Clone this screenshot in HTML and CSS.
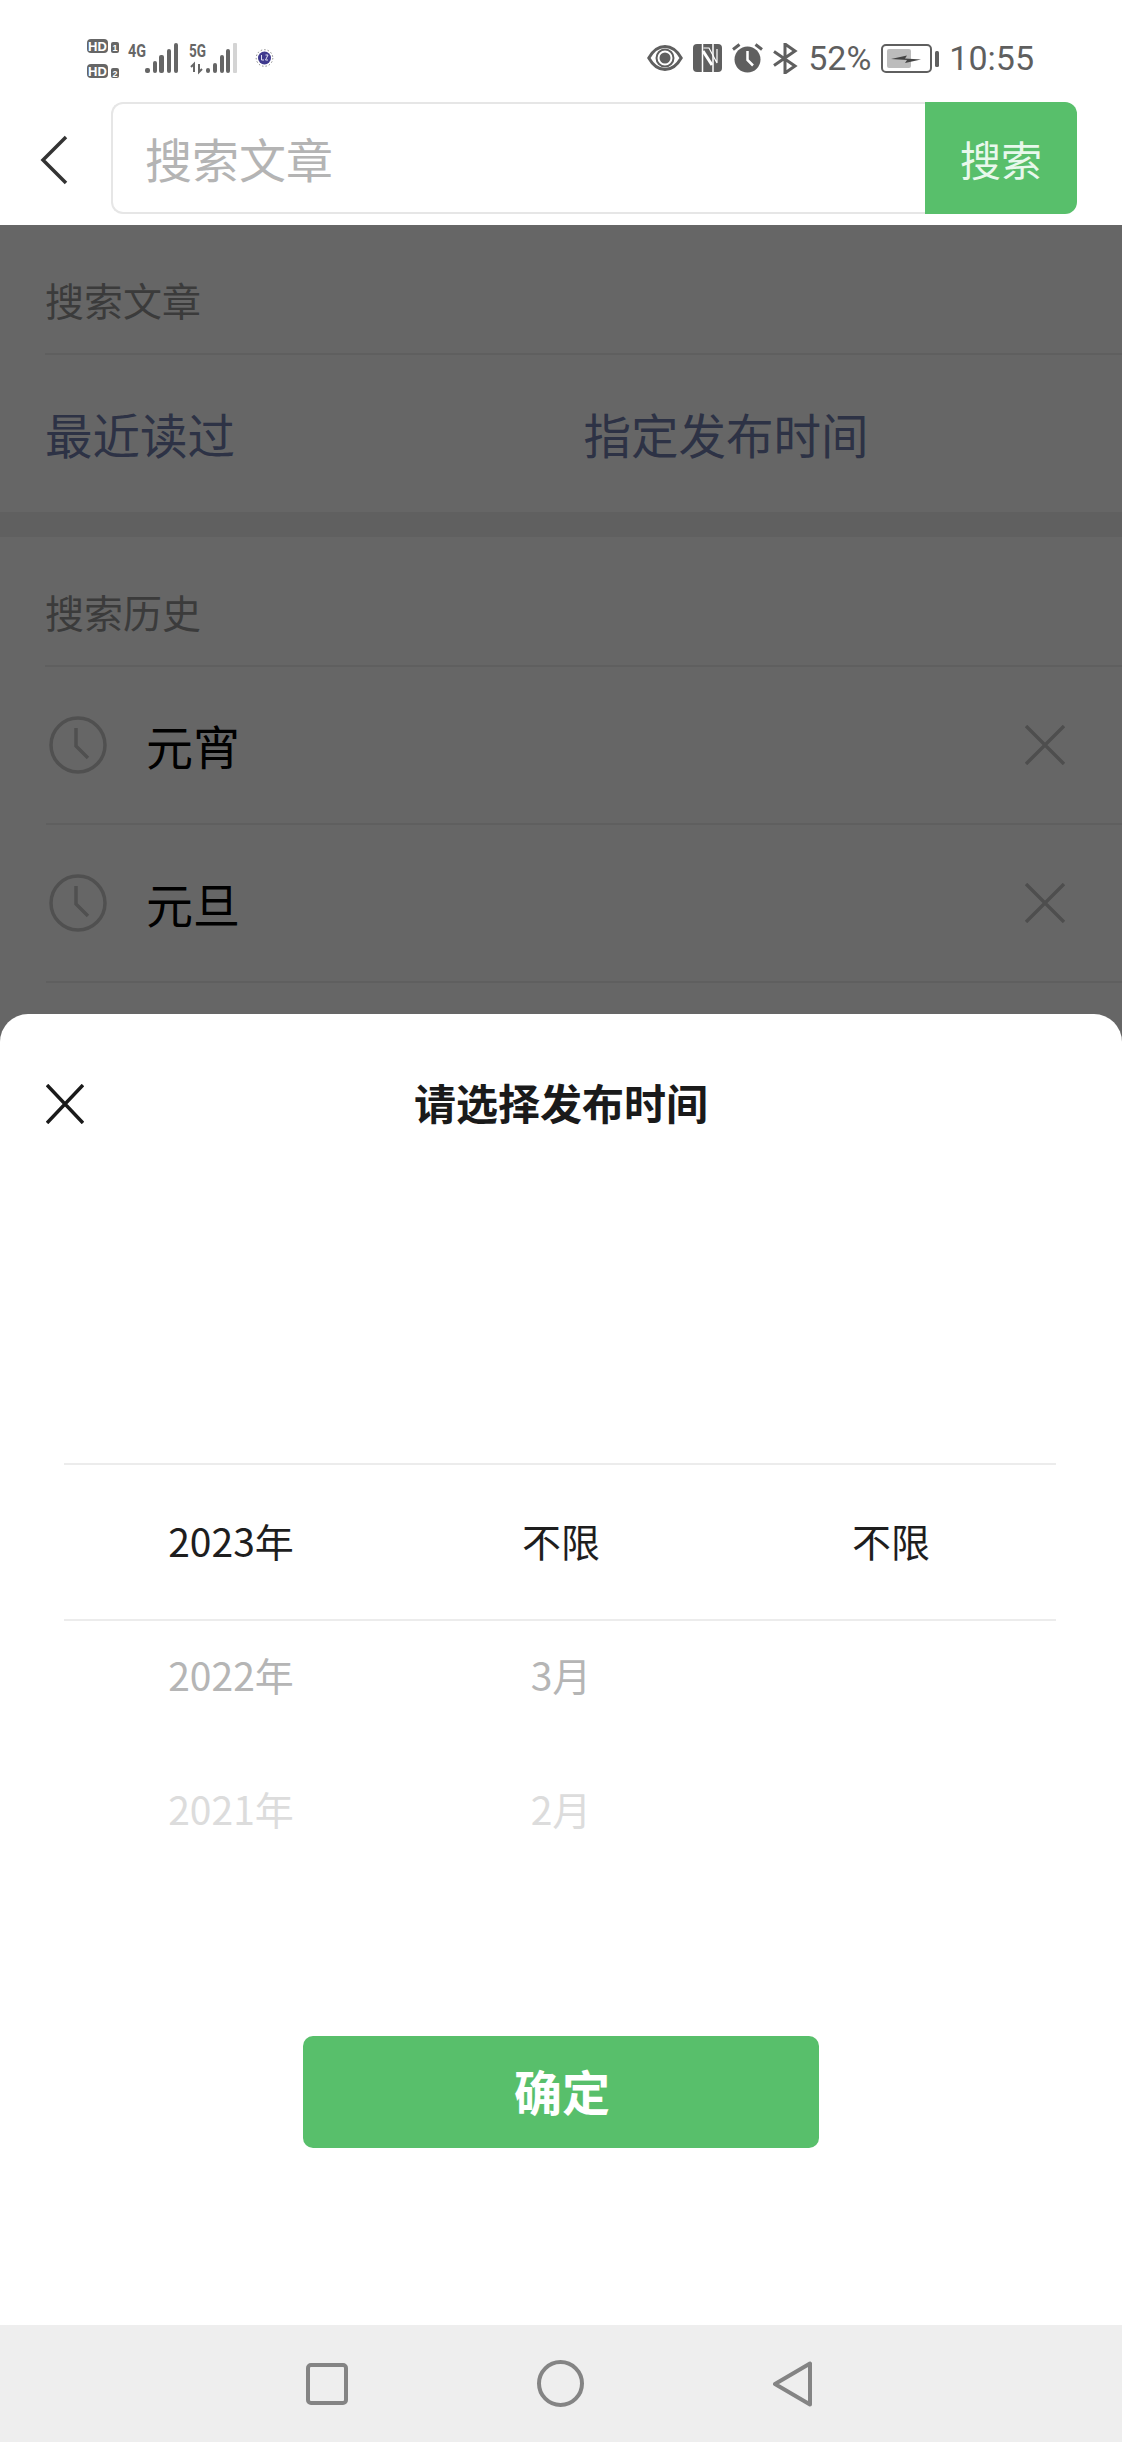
FILE: index.html
```html
<!DOCTYPE html>
<html lang="zh-CN">
<head>
    <meta charset="UTF-8">
    <meta name="viewport" content="width=device-width, initial-scale=1.0">
    <title>搜索文章</title>
    <link rel="stylesheet" href="styles.css">
</head>
<body>
    <div class="screen">
        <!-- Phone status bar -->
        <div class="status">
            <svg class="status-left" width="190" height="44" viewBox="87 36 190 44">
                <rect x="87" y="39" width="21" height="14" rx="4" fill="#666"/>
                <text x="97.5" y="50.5" class="hd">HD</text>
                <rect x="111" y="42" width="8" height="11" rx="2" fill="#666"/>
                <text x="115" y="51" class="sim">1</text>
                <rect x="87" y="64" width="21" height="14" rx="4" fill="#666"/>
                <text x="97.5" y="75.5" class="hd">HD</text>
                <rect x="111" y="68" width="8" height="10" rx="2" fill="#666"/>
                <text x="115" y="76.5" class="sim">2</text>
                <text x="128" y="56.500" class="net" textLength="18" lengthAdjust="spacingAndGlyphs">4G</text>
                <g fill="#666">
                    <rect x="145" y="68" width="5" height="5" rx="2"/>
                    <rect x="153" y="61" width="4" height="12" rx="2"/>
                    <rect x="159" y="55" width="5" height="18" rx="2"/>
                    <rect x="167" y="49" width="4" height="24" rx="2"/>
                    <rect x="174" y="43" width="4" height="30" rx="2"/>
                </g>
                <text x="189" y="56.500" class="net" textLength="17" lengthAdjust="spacingAndGlyphs">5G</text>
                <path d="M194 72v-8l-3 3M199 64v8l3-3" fill="none" stroke="#666" stroke-width="2"/>
                <g fill="#666">
                    <rect x="206" y="68" width="4" height="5" rx="2"/>
                    <rect x="213" y="63" width="4" height="10" rx="2"/>
                    <rect x="220" y="55" width="4" height="18" rx="2"/>
                    <rect x="226" y="49" width="4" height="24" rx="2"/>
                </g>
                <rect x="233" y="43" width="4" height="30" rx="1" fill="#d4d4d4"/>
                <circle cx="264.500" cy="58" r="8.300" fill="none" stroke="#555" stroke-width="0.7" stroke-dasharray="1.500 2"/>
                <circle cx="264.500" cy="58" r="6.500" fill="#3f3a8e"/>
                <path d="M261.500 55v5h2.500M265.500 55h2.500l-2.500 5h2.500" fill="none" stroke="#dcdcf0" stroke-width="1"/>
            </svg>
            <div class="status-right">
                <svg width="36" height="28" viewBox="0 0 36 28">
                    <path d="M1.800 14C6 6.500 11.500 2.500 18 2.500S30 6.500 34.200 14C30 21.500 24.500 25.500 18 25.500S6 21.500 1.800 14z" fill="none" stroke="#5f5f5f" stroke-width="3"/>
                    <circle cx="18" cy="14" r="8.500" fill="none" stroke="#5f5f5f" stroke-width="2"/>
                    <circle cx="18" cy="14" r="5.500" fill="#5f5f5f"/>
                </svg>
                <svg width="29" height="28" viewBox="0 0 29 28">
                    <rect width="29" height="28" rx="4" fill="#5f5f5f"/>
                    <path d="M9.500 0v28M20 0v28" stroke="#fff" stroke-width="1.500"/>
                    <path d="M10 7l9 14" stroke="#fff" stroke-width="3"/>
                    <path d="M10.500 4h5.500l8 15V5" fill="none" stroke="#fff" stroke-width="1.200"/>
                </svg>
                <svg width="31" height="30" viewBox="0 0 31 30">
                    <circle cx="15.500" cy="16.500" r="13" fill="#5f5f5f"/>
                    <path d="M15.500 8v9l5.500 5.500" fill="none" stroke="#fff" stroke-width="2.500"/>
                    <path d="M1 6.500l6.500-5M30 6.500l-6.500-5" stroke="#5f5f5f" stroke-width="3"/>
                </svg>
                <svg width="25" height="31" viewBox="0 0 25 31">
                    <path d="M1 8.500l21 14.500-10 7V1l10 7L1 22.500" fill="none" stroke="#5f5f5f" stroke-width="3"/>
                </svg>
                <span class="percent">52%</span>
                <svg width="58" height="29" viewBox="0 0 58 29">
                    <rect x="1" y="1" width="49" height="27" rx="4" fill="none" stroke="#5f5f5f" stroke-width="2"/>
                    <rect x="6" y="5" width="24" height="19" rx="2" fill="#bcbcbc"/>
                    <path d="M10 15l16-3.500-2 3 16 1-16 3.500 2-3z" fill="#444"/>
                    <rect x="54" y="7" width="4" height="16" rx="1.500" fill="#5f5f5f"/>
                </svg>
                <span class="clock-time">10:55</span>
            </div>
        </div>

        <!-- Search box -->
        <div class="search-row">
            <svg class="back" width="30" height="50" viewBox="0 0 30 50">
                <path d="M26 2L3 25l23 23" fill="none" stroke="#333" stroke-width="3.500"/>
            </svg>
            <form class="search-box">
                <input class="search-input" type="text" placeholder="搜索文章">
                <button class="search-btn" type="button">搜索</button>
            </form>
        </div>

        <!-- Page under the dialog -->
        <div class="section">
            <div class="section-title">搜索文章</div>
            <div class="options">
                <span class="option">最近读过</span>
                <span class="option">指定发布时间</span>
            </div>
        </div>
        <div class="section section-history">
            <div class="section-title">搜索历史</div>
            <div class="history-row">
                <svg class="clock" width="62" height="62" viewBox="0 0 62 62">
                    <circle cx="31" cy="31" r="27" fill="none" stroke="#c8c8c8" stroke-width="3.500"/>
                    <path d="M29 14v18l12 12" fill="none" stroke="#c8c8c8" stroke-width="3.500"/>
                </svg>
                <span class="history-text">元宵</span>
                <svg class="remove" width="40" height="40" viewBox="0 0 40 40">
                    <path d="M1 1l38 38M39 1L1 39" stroke="#c4c4c4" stroke-width="3.500"/>
                </svg>
            </div>
            <div class="history-row">
                <svg class="clock" width="62" height="62" viewBox="0 0 62 62">
                    <circle cx="31" cy="31" r="27" fill="none" stroke="#c8c8c8" stroke-width="3.500"/>
                    <path d="M29 14v18l12 12" fill="none" stroke="#c8c8c8" stroke-width="3.500"/>
                </svg>
                <span class="history-text">元旦</span>
                <svg class="remove" width="40" height="40" viewBox="0 0 40 40">
                    <path d="M1 1l38 38M39 1L1 39" stroke="#c4c4c4" stroke-width="3.500"/>
                </svg>
            </div>
        </div>

        <!-- Dimmed layer with the date dialog -->
        <div class="mask">
            <div class="sheet">
                <div class="sheet-head">
                    <svg width="38" height="40" viewBox="0 0 38 40">
                        <path d="M1 1l36 38M37 1L1 39" stroke="#1a1a1a" stroke-width="3.500"/>
                    </svg>
                    <h1 class="sheet-title">请选择发布时间</h1>
                </div>
                <div class="picker">
                    <div class="picker-row picker-current">
                        <span>2023年</span><span>不限</span><span>不限</span>
                    </div>
                    <div class="picker-row picker-near">
                        <span>2022年</span><span>3月</span><span></span>
                    </div>
                    <div class="picker-row picker-far">
                        <span>2021年</span><span>2月</span><span></span>
                    </div>
                </div>
                <button class="confirm" type="button">确定</button>
            </div>
            <div class="nav">
                <svg width="42" height="42" viewBox="0 0 42 42">
                    <rect x="2" y="2" width="38" height="38" rx="3" fill="none" stroke="#848484" stroke-width="4"/>
                </svg>
                <svg width="47" height="47" viewBox="0 0 47 47">
                    <circle cx="23.500" cy="23.500" r="21.500" fill="none" stroke="#848484" stroke-width="4"/>
                </svg>
                <svg width="39" height="46" viewBox="0 0 39 46">
                    <path d="M37 2.500v41L2 23z" fill="none" stroke="#848484" stroke-width="4" stroke-linejoin="round"/>
                </svg>
            </div>
        </div>
    </div>
</body>
</html>
```

FILE: styles.css
```css
/* Reset */
* {
    margin: 0;
    padding: 0;
    box-sizing: border-box;
}

body {
    font-family: "Noto Sans CJK SC", "Noto Sans", sans-serif;
    background-color: #fff;
}

.screen {
    position: relative;
    width: 1122px;
    height: 2442px;
    overflow: hidden;
}

/* Status bar */
.status {
    display: flex;
    align-items: center;
    justify-content: space-between;
    height: 102px;
    padding: 14px 88px 0 87px;
}

.status svg {
    display: block;
}

.status-right {
    display: flex;
    align-items: center;
    gap: 10px;
    color: #5f5f5f;
    font-family: Roboto, sans-serif;
    font-size: 34px;
}

.hd {
    fill: #fff;
    font-family: "Liberation Sans", sans-serif;
    font-size: 13px;
    font-weight: 700;
    text-anchor: middle;
}

.sim {
    fill: #fff;
    font-family: "Liberation Sans", sans-serif;
    font-size: 9px;
    font-weight: 700;
    text-anchor: middle;
}

.net {
    fill: #666;
    font-family: Roboto, sans-serif;
    font-size: 19px;
    font-weight: 700;
}

/* Search row */
.search-row {
    display: flex;
    align-items: flex-start;
    height: 123px;
    padding-left: 40px;
}

.back {
    margin-top: 33px;
    margin-right: 41px;
}

.search-box {
    display: flex;
    width: 966px;
    height: 112px;
}

.search-input {
    flex: 1;
    min-width: 0;
    padding: 0 0 1px 32px;
    border: 2px solid #e6e6e6;
    border-right: none;
    border-radius: 12px 0 0 12px;
    outline: none;
    font-family: inherit;
    font-size: 47px;
}

.search-input::placeholder {
    color: #b4b4b4;
}

.search-btn {
    width: 152px;
    border: none;
    border-radius: 0 12px 12px 0;
    background-color: #58bf6b;
    color: #e8f8ec;
    font-family: inherit;
    font-size: 41px;
}

/* Page content */
.section-title {
    display: flex;
    align-items: flex-end;
    height: 130px;
    padding-bottom: 34px;
    margin-left: 45px;
    border-bottom: 2px solid #eee;
    color: #949494;
    font-size: 39px;
    line-height: 40px;
}

.options {
    display: flex;
    align-items: center;
    height: 157px;
    padding: 0 0 1px 45px;
}

.option {
    width: 541px;
    color: #707dac;
    font-size: 47.5px;
}

.section-history {
    border-top: 25px solid #efefef;
}

.history-row {
    display: flex;
    align-items: center;
    height: 158px;
    margin-left: 46px;
    padding-right: 57px;
    border-bottom: 2px solid #eee;
}

.clock {
    flex: none;
    margin-left: 1px;
}

.history-text {
    flex: 1;
    margin-left: 37px;
    padding-bottom: 2px;
    color: #000;
    font-size: 47px;
}

/* Dim layer */
.mask {
    position: absolute;
    top: 225px;
    left: 0;
    right: 0;
    bottom: 0;
    display: flex;
    flex-direction: column;
    padding-top: 789px;
    background-color: rgba(0, 0, 0, 0.6);
}

.sheet {
    flex: 1;
    border-radius: 28px 28px 0 0;
    background-color: #fff;
}

.sheet-head {
    position: relative;
    display: flex;
    align-items: center;
    justify-content: center;
    height: 180px;
}

.sheet-head svg {
    position: absolute;
    left: 46px;
    top: 70px;
}

.sheet-title {
    padding-bottom: 5px;
    color: #1a1a1a;
    font-size: 42px;
    font-weight: 700;
}

.picker {
    display: flex;
    flex-direction: column;
    gap: 19px;
    margin: 269px 66px 0 64px;
}

.picker-row {
    display: grid;
    grid-template-columns: repeat(3, 1fr);
    align-items: center;
    height: 116px;
    padding-left: 2px;
    font-size: 39px;
    text-align: center;
}

.picker-current {
    height: 158px;
    margin-bottom: -24px;
    padding-bottom: 5px;
    border-top: 2px solid #ececec;
    border-bottom: 2px solid #ececec;
    color: #1e1e1e;
}

.picker-near {
    color: #b5b5b5;
}

.picker-far {
    margin-top: -1px;
    color: #dcdcdc;
}

.confirm {
    display: block;
    width: 516px;
    height: 112px;
    margin: 170px auto 0;
    padding: 0 0 4px 2px;
    border: none;
    border-radius: 10px;
    background-color: #58bf6b;
    color: #fff;
    font-family: inherit;
    font-size: 48px;
    font-weight: 700;
}

/* Navigation bar */
.nav {
    display: flex;
    align-items: center;
    gap: 189px;
    height: 117px;
    padding-left: 306px;
    background-color: #eee;
}
```
